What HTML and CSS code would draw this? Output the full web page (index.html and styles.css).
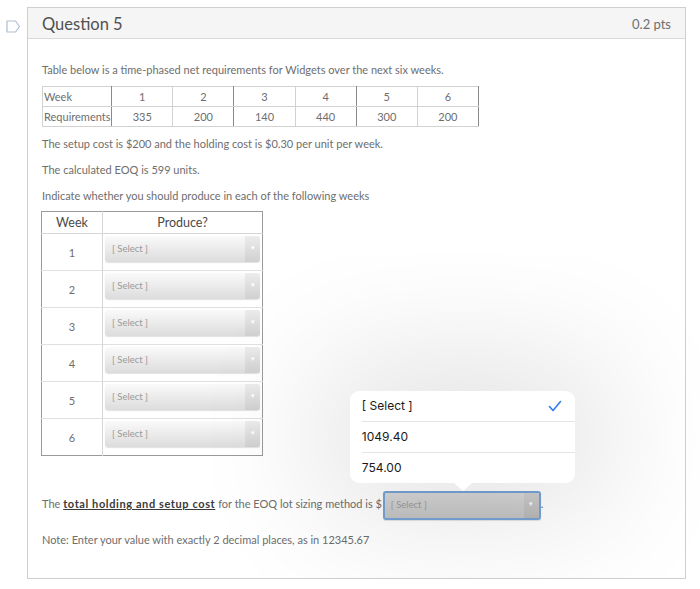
FILE: index.html
```html
<!DOCTYPE html>
<html lang="en">
<head>
  <meta charset="UTF-8">
  <title>Question 5</title>
  <link rel="stylesheet" href="styles.css">
</head>
<body>
  <div class="page">
    <div class="flag">
      <svg width="15" height="13" viewBox="0 0 15 13">
        <path d="M1 1 H9.5 L13.5 6.5 L9.5 12 H1 Z" fill="none" stroke="#adbdd2" stroke-width="1.2" stroke-linejoin="round"/>
      </svg>
    </div>

    <div class="question">
      <div class="q-header">
        <span class="q-title">Question 5</span>
        <span class="q-pts">0.2 pts</span>
      </div>

      <div class="q-body">
        <p class="intro">Table below is a time-phased net requirements for Widgets over the next six weeks.</p>

        <table class="req">
          <tr>
            <td class="label">Week</td>
            <td>1</td><td>2</td><td>3</td><td>4</td><td>5</td><td>6</td>
          </tr>
          <tr>
            <td class="label">Requirements</td>
            <td>335</td><td>200</td><td>140</td><td>440</td><td>300</td><td>200</td>
          </tr>
        </table>

        <p class="after-req">The setup cost is $200 and the holding cost is $0.30 per unit per week.</p>
        <p>The calculated EOQ is 599 units.</p>
        <p class="before-produce">Indicate whether you should produce in each of the following weeks</p>

        <table class="produce">
          <tr><th class="wk-head">Week</th><th>Produce?</th></tr>
          <tr><td class="wk">1</td><td class="pick"><span class="select"><span class="sel-text">[ Select ]</span><span class="sel-arrow">▾</span></span></td></tr>
          <tr><td class="wk">2</td><td class="pick"><span class="select"><span class="sel-text">[ Select ]</span><span class="sel-arrow">▾</span></span></td></tr>
          <tr><td class="wk">3</td><td class="pick"><span class="select"><span class="sel-text">[ Select ]</span><span class="sel-arrow">▾</span></span></td></tr>
          <tr><td class="wk">4</td><td class="pick"><span class="select"><span class="sel-text">[ Select ]</span><span class="sel-arrow">▾</span></span></td></tr>
          <tr><td class="wk">5</td><td class="pick"><span class="select"><span class="sel-text">[ Select ]</span><span class="sel-arrow">▾</span></span></td></tr>
          <tr><td class="wk">6</td><td class="pick"><span class="select"><span class="sel-text">[ Select ]</span><span class="sel-arrow">▾</span></span></td></tr>
        </table>

        <p class="cost">The <u><strong>total holding and setup cost</strong></u> for the EOQ lot sizing method is $<span class="select-wrap"><span class="select focused"><span class="sel-text">[ Select ]</span><span class="sel-arrow">▾</span></span><span class="popover">
              <span class="pop-item">[ Select ]
                <svg class="check" width="14" height="12" viewBox="0 0 14 12"><polyline points="1.5,6.5 5,10.5 12.5,1.5" fill="none" stroke="#2f7cf0" stroke-width="1.6" stroke-linecap="round" stroke-linejoin="round"/></svg>
              </span>
              <span class="pop-item">1049.40</span>
              <span class="pop-item">754.00</span>
            </span></span>.</p>

        <p class="note">Note: Enter your value with exactly 2 decimal places, as in 12345.67</p>
      </div>
    </div>
  </div>
</body>
</html>
```

FILE: styles.css
```css
* {
  margin: 0;
  padding: 0;
  box-sizing: border-box;
}

body {
  font-family: Lato, "Open Sans", sans-serif;
  background: #fff;
  color: #6e6e6e;
  width: 700px;
}

.page {
  display: flex;
  padding-top: 7px;
}

.flag {
  width: 27px;
  padding: 10px 0 0 6px;
}

.question {
  width: 659px;
  border: 1px solid #cfcfcf;
}

.q-header {
  height: 31px;
  background: #f5f5f5;
  border-bottom: 1px solid #d9d9d9;
  display: flex;
  justify-content: space-between;
  align-items: center;
  padding: 1px 14px 0 14px;
}

.q-title {
  font-size: 16.5px;
  color: #505050;
}

.q-pts {
  font-size: 13px;
  color: #707070;
}

.q-body {
  padding: 24px 14px 31px 14px;
}

p {
  font-size: 11px;
  line-height: 14px;
  margin-bottom: 12px;
}

.intro {
  margin-bottom: 9px;
}

.after-req {
  margin-top: 10px;
}

.before-produce {
  margin-bottom: 8px;
}

/* requirements table */
.req {
  border-collapse: collapse;
  width: 437px;
  border: 1px solid #8a8a8a;
  font-size: 11px;
  color: #6e6e6e;
}

.req td {
  height: 20px;
  padding: 0;
  text-align: center;
  border: 1px solid #d2d2d2;
  width: 61px;
}

.req td:nth-child(odd) {
  border-right: 1px solid #8a8a8a;
}

.req td.label {
  width: 69px;
  text-align: left;
  padding-left: 1px;
}

/* produce table */
.produce {
  border-collapse: collapse;
  width: 222px;
  border: 1px solid #9a9a9a;
  margin-left: -1px;
}

.produce th {
  height: 22px;
  font-size: 12.5px;
  font-weight: normal;
  color: #4a4a4a;
  border-bottom: 1px solid #d6d6d6;
  padding: 0;
}

.produce th.wk-head {
  width: 63px;
  border-right: 1px solid #d6d6d6;
}

.produce td {
  border-top: 1px solid #e0e0e0;
  padding: 0;
}

.produce .wk {
  text-align: center;
  font-size: 11px;
  border-right: 1px solid #d6d6d6;
}

.produce td.pick {
  padding: 2px 2px 8px 2px;
}

.select {
  display: flex;
  width: 155px;
  height: 26px;
  border-radius: 3px;
  background: linear-gradient(#fafafa, #dcdcdc);
  box-shadow: 0 1px 1px rgba(0, 0, 0, 0.12);
  overflow: hidden;
}

.sel-text {
  flex: 1;
  font-size: 9.5px;
  color: #999;
  padding-left: 7px;
  line-height: 25px;
}

.sel-arrow {
  width: 15px;
  background: linear-gradient(#ececec, #d0d0d0);
  color: #fff;
  font-size: 7px;
  text-align: center;
  line-height: 22px;
}

/* cost line with open dropdown */
.cost {
  margin-top: 33px;
  margin-bottom: 13px;
  line-height: 29px;
}

.cost strong {
  font-weight: bold;
  color: #3a3a3a;
  letter-spacing: 0.6px;
}

.cost u {
  text-decoration-color: #3a3a3a;
}

.select-wrap {
  position: relative;
  display: inline-block;
  vertical-align: middle;
  margin-left: 1px;
}

.select.focused {
  width: 158px;
  height: 29px;
  border: 2px solid #76a3d6;
  background: linear-gradient(#d8d8d8, #c4c4c4);
}

.select.focused .sel-text {
  color: #9a9a9a;
  line-height: 23px;
  padding-left: 6px;
}

.select.focused .sel-arrow {
  background: linear-gradient(#cfcfcf, #b8b8b8);
  line-height: 20px;
}

.popover {
  position: absolute;
  z-index: 2;
  left: -33px;
  bottom: calc(100% + 8px);
  width: 225px;
  background: #fff;
  border-radius: 9px;
  box-shadow: 0 0 130px 35px rgba(0, 0, 0, 0.11);
  display: flex;
  flex-direction: column;
  font-family: Inter, "Liberation Sans", sans-serif;
  font-size: 12px;
  color: #1a1a1a;
}

.popover::after {
  content: "";
  position: absolute;
  left: 104px;
  bottom: -8px;
  border-left: 9px solid transparent;
  border-right: 9px solid transparent;
  border-top: 8px solid #fff;
}

.pop-item {
  display: flex;
  justify-content: space-between;
  align-items: center;
  height: 31px;
  line-height: 31px;
  margin-left: 12px;
  padding-right: 13px;
  border-top: 1px solid #e4e4e4;
}

.pop-item:first-child {
  border-top: none;
  height: 30px;
}

.check {
  display: block;
}

.note {
  margin-bottom: 0;
}
```
